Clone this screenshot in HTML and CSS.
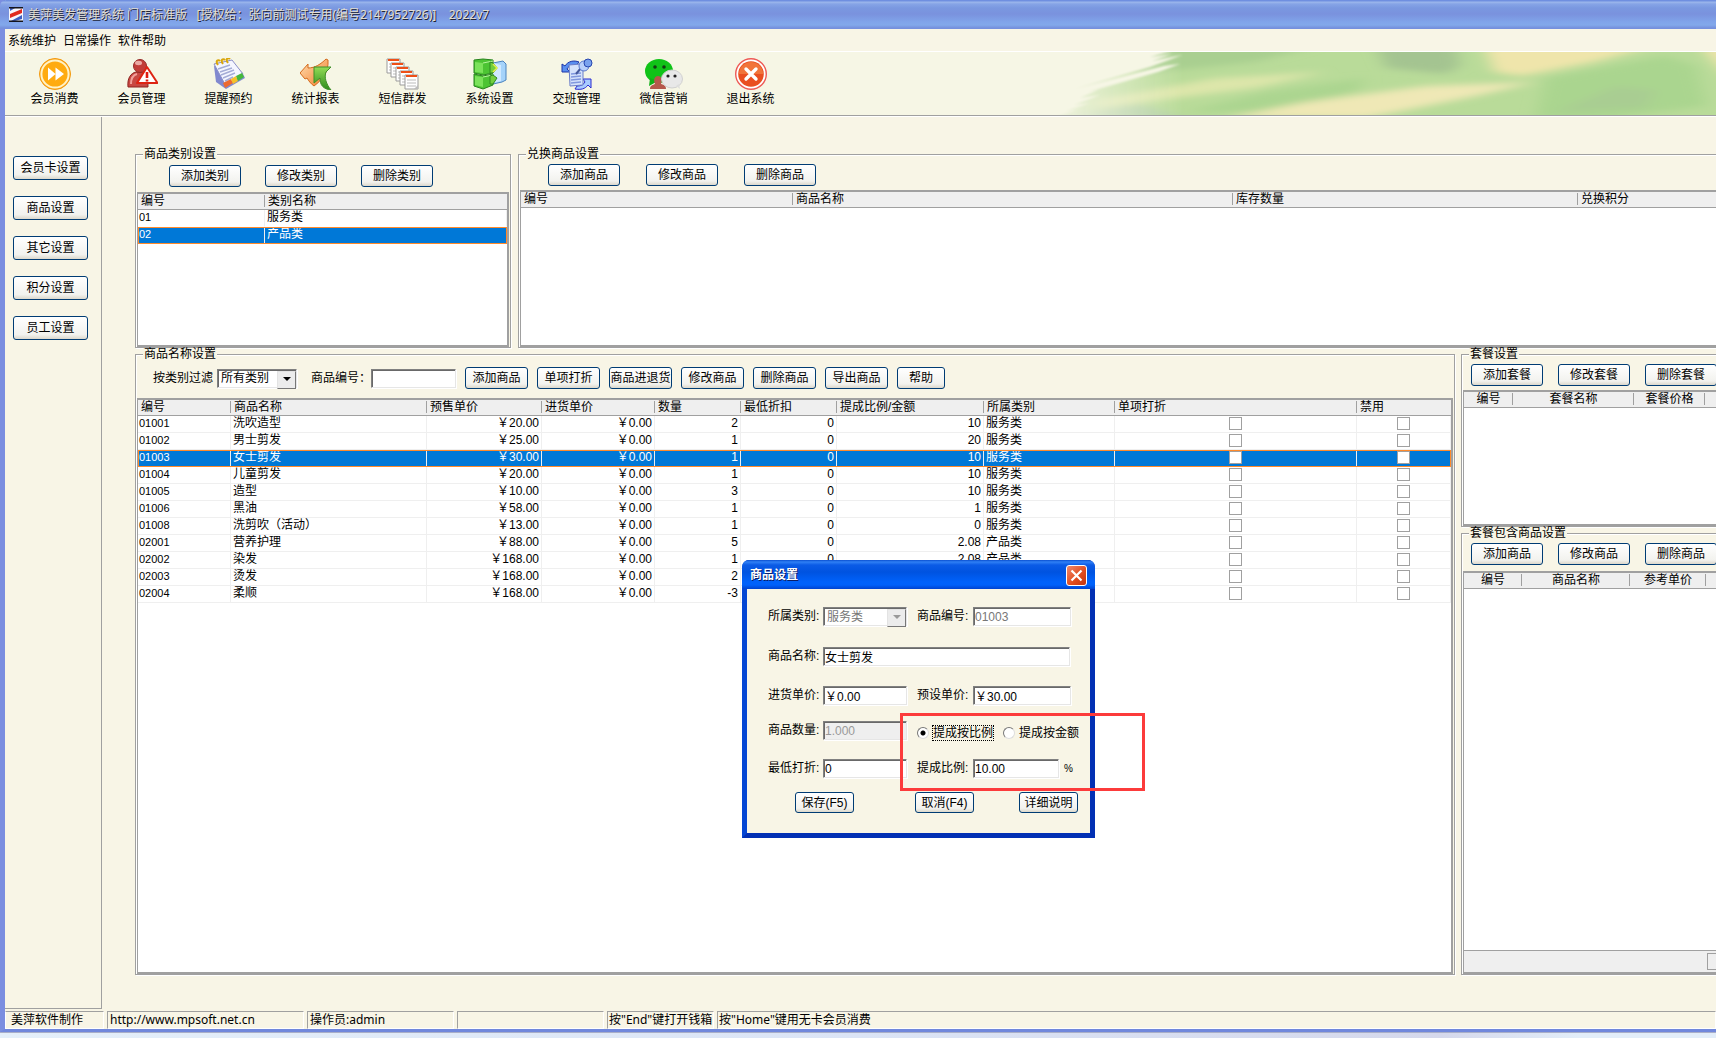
FILE: index.html
```html
<!DOCTYPE html>
<html lang="zh-CN">
<head>
<meta charset="utf-8">
<title>美萍美发管理系统</title>
<link rel="stylesheet" href="styles.css">
</head>
<body>
<div class="window">
  <header class="titlebar">
    <svg class="logo" width="14" height="15" viewBox="0 0 14 15"><rect width="14" height="15" fill="#f6f6fb"/><path d="M1 1h5L1 4z" fill="#3f5fc0"/><path d="M1 7l12-5v4L1 11z" fill="#e02a1e"/><path d="M13 8v4l-7 2H2z" fill="#3f5fc0"/><path d="M0 0h14v1.500H0zM0 13.500h14V15H0z" fill="#14141c"/></svg>
    <h1>美萍美发管理系统 门店标准版&nbsp;&nbsp; [授权给：张向前测试专用(编号2147952726)]&nbsp;&nbsp;&nbsp; 2022v7</h1>
  </header>
  <nav class="menu"><a href="#">系统维护</a><a href="#">日常操作</a><a href="#">软件帮助</a></nav>
  <div class="toolbar">
    <button class="tool"><svg width="32" height="32" viewBox="0 0 32 32"><circle cx="16" cy="16" r="15.500" fill="#ffa51c" stroke="#f29a10"/><circle cx="16" cy="16" r="13.600" fill="#ffab10" stroke="#fff3c8" stroke-width="2"/><path d="M9 9.500l7.500 6.500L9 22.500zM16.500 9.500L25 16l-8.500 6.500z" fill="#fff"/></svg>会员消费</button>
    <button class="tool"><svg width="32" height="32" viewBox="0 0 32 32"><path d="M2 29c-1-9 3-14 8-15h6c5 1 6 6 6 15z" fill="#c84842" stroke="#8e2521"/><path d="M5 26c0-5 2-9 6-10" stroke="#f0a09a" stroke-width="2" fill="none"/><circle cx="14" cy="8" r="6.500" fill="#c23d38" stroke="#952b28"/><ellipse cx="12.500" cy="5" rx="3.500" ry="2.200" fill="#eaa9a3"/><path d="M21 9l10.500 16H11z" fill="#fff" stroke="#dd2413" stroke-width="2" stroke-linejoin="round"/><path d="M21 14v6M21 21.500v2" stroke="#e01b10" stroke-width="2.600"/></svg>会员管理</button>
    <button class="tool"><svg width="32" height="32" viewBox="0 0 32 32"><path d="M1 8l2 16 10 7 19-11-3-6z" fill="#8189cf"/><path d="M1 6L19 2l11 14-17 12z" fill="#f4f6ff" stroke="#8a8fc9"/><path d="M5 11l12-4M7 14l12-4M8 17l13-5M10 20l12-5M12 23l8-4" stroke="#a4acd6" stroke-width="1.400"/><path d="M10 25l8-4 2 4-8 5z" fill="#ed6a30"/><path d="M18 21l5-3 2 5-5 3z" fill="#f5c12a"/><path d="M23 18l6-3 2 4-6 4z" fill="#45b83c"/><path d="M5 7c-3-4 0-6 2-4M10 6c-3-4 0-6 2-4M15 5c-3-4 0-6 2-4" fill="none" stroke="#d9a60b" stroke-width="2"/></svg>提醒预约</button>
    <button class="tool"><svg width="32" height="32" viewBox="0 0 32 32"><defs><linearGradient id="or" x2="1" y2="1"><stop stop-color="#ffe0b4"/><stop offset="1" stop-color="#f27c28"/></linearGradient><linearGradient id="gr" x2="0" y2="1"><stop stop-color="#93dc55"/><stop offset="1" stop-color="#2c8b1c"/></linearGradient></defs><path d="M0 15L8 6v4c7 0 13-4 18-9l2 1c1 12-6 20-14 26-4-3-5-5-7-8l-2 1z" fill="url(#or)" stroke="#d46b1d"/><path d="M14 9h17l-5 5c-2 5 0 12 5 18-8-1-11-5-11-12l-6 5z" fill="url(#gr)" stroke="#3f8f28"/></svg>统计报表</button>
    <button class="tool"><svg width="34" height="32" viewBox="0 0 34 32"><g id="sheet"><path d="M1 1h13v14H1z" fill="#fff" stroke="#9b9b9b"/><path d="M2 1h11v2H2z" fill="#ee5018"/><path d="M3 6h9M3 9h9M3 12h9" stroke="#bbb"/></g><use href="#sheet" x="4" y="4"/><use href="#sheet" x="9" y="8"/><use href="#sheet" x="13" y="12"/><use href="#sheet" x="18" y="16"/><path d="M28 31l4-4v4z" fill="#bbb"/></svg>短信群发</button>
    <button class="tool"><svg width="34" height="32" viewBox="0 0 34 32"><path d="M20 5l10-2 3 3v16l-4 2-9 2z" fill="#a5d3fa" stroke="#4b83bf"/><path d="M20 5l8 2v16l-8 2z" fill="#cfe8ff"/><path d="M1 2l9-1 10 1v13l-10 2-9-2z" fill="#4cc433" stroke="#27831d"/><path d="M1 16l9 2 10-2v11l-10 4-9-3z" fill="#4cc433" stroke="#27831d"/><path d="M2 4l8 1v10l-8-1zM2 18l8 1v10l-8-2z" fill="#7be25a"/><path d="M10 5l10-2M10 19l10-2" stroke="#b5f29c"/><path d="M17 4l3 1 4 5-4 5h-3v-4zM17 18l3-1 4 3-4 6h-3z" fill="#72cf3d" stroke="#2c8a20"/><path d="M20 6l4 4-4 4" fill="none" stroke="#e3ef4b" stroke-width="1.500"/></svg>系统设置</button>
    <button class="tool"><svg width="32" height="32" viewBox="0 0 32 32"><path d="M1 6v8h8l-3-3c2-4 6-4 9-3l3-4C13 2 7 3 4 8z" fill="#5a8ff0" stroke="#1d35a8"/><path d="M30 30v-9h-8l2 3c-2 3-4 4-8 4l-2 3c6 1 10 0 13-4z" fill="#a8cbff" stroke="#2a2ad0"/><path d="M8 7l12-1 2 3v18l-13 1z" fill="#d5e2fb" stroke="#6b7ec8"/><path d="M10 16l10-1M10 19l10-1M10 22l10-1M10 25l10-1" stroke="#8097dd" stroke-width="1.300"/><path d="M15 16l5-6" stroke="#44589c" stroke-width="2"/><circle cx="23" cy="8" r="5" fill="#b9d0fb" stroke="#5a78cd"/><circle cx="27" cy="5" r="4" fill="#7aa2ee" stroke="#2746af"/></svg>交班管理</button>
    <button class="tool"><svg width="38" height="32" viewBox="0 0 38 32"><ellipse cx="14" cy="13" rx="14" ry="12" fill="#10c318"/><path d="M5 20l-1 8 9-5z" fill="#10b018"/><circle cx="10" cy="9" r="1.800" fill="#143c14"/><circle cx="19" cy="9" r="1.800" fill="#143c14"/><path d="M5 31c0-4 3-4 5-5-2-5 0-8 3-8s5 3 3 8c3 1 5 1 5 5z" fill="#b5584c"/><ellipse cx="27" cy="21" rx="10.500" ry="9" fill="#e8e8e8" stroke="#d0d0d0"/><path d="M31 28l4 3-1-5z" fill="#ddd"/><circle cx="23" cy="18" r="1.600" fill="#222"/><circle cx="30" cy="18" r="1.600" fill="#222"/></svg>微信营销</button>
    <button class="tool"><svg width="32" height="32" viewBox="0 0 32 32"><circle cx="16" cy="16" r="15.300" fill="#fff" stroke="#ee5a55" stroke-width="1.400"/><circle cx="16" cy="16" r="12.800" fill="#e94f20"/><path d="M4 16a12 12 0 0 1 24 0z" fill="#f1743a"/><path d="M11 11l10 10M21 11L11 21" stroke="#fff" stroke-width="3.400" stroke-linecap="round"/></svg>退出系统</button>
    <svg class="banner" width="680" height="63" viewBox="0 0 680 63" aria-hidden="true">
      <defs><filter id="b3" x="-30%" y="-60%" width="160%" height="220%"><feGaussianBlur stdDeviation="8 3"/></filter><filter id="b1"><feGaussianBlur stdDeviation="1"/></filter>
      <linearGradient id="fade"><stop stop-color="#fff" stop-opacity="0"/><stop offset=".11" stop-color="#fff" stop-opacity=".55"/><stop offset=".2" stop-color="#fff"/></linearGradient>
      <mask id="brush"><path fill="url(#fade)" filter="url(#b1)" d="M142-3L114 5l22-3-20 7 30-6-32 12-76 22 90-23 16-2-22 8-70 20 10-2-18 8 20-3-26 10 16-2-24 8 12-1-34 10 26-3-16 5H700V-3z"/></mask></defs>
      <g mask="url(#brush)"><rect width="680" height="63" fill="#b9db99"/>
      <g filter="url(#b3)">
        <path d="M110-6h170l-60 16-120 12z" fill="#a9cf90"/>
        <path d="M60 48l120-22 110-6-70 16-160 20z" fill="#dde6aa"/>
        <path d="M20 66l80-14 50 14z" fill="#b0cfa4"/>
        <path d="M150 60l80-20 100-14-10 14-90 20z" fill="#acd590"/>
        <path d="M190 66l80-16 120-16 110-4-60 14-110 22z" fill="#efe8b6"/>
        <path d="M340-6h80l4 20-14 8-60-6z" fill="#a4c491"/>
        <path d="M448-6h170l-60 16-72 14-28-4z" fill="#efe5ab"/>
        <path d="M500 66l10-40 120-22 30 10 10 40-100 12z" fill="#aad58f"/>
        <path d="M520 60l60-26 40 4-10 18z" fill="#a9cd92"/>
        <path d="M664-6h30v34z" fill="#efe5ab"/>
      </g></g>
    </svg>
  </div>

  <div class="body">
    <aside class="sidebar">
      <button class="btn">会员卡设置</button><button class="btn">商品设置</button><button class="btn">其它设置</button><button class="btn">积分设置</button><button class="btn">员工设置</button>
    </aside>
    <main class="content">
      <div class="row-top">
        <fieldset class="group categories">
          <legend>商品类别设置</legend>
          <div class="actions"><button class="btn">添加类别</button><button class="btn">修改类别</button><button class="btn">删除类别</button></div>
          <div class="grid">
            <table>
              <colgroup><col class="w127"><col></colgroup>
              <thead><tr><th>编号</th><th>类别名称</th></tr></thead>
              <tbody><tr><td class="code">01</td><td>服务类</td></tr><tr class="selected"><td class="code">02</td><td>产品类</td></tr></tbody>
            </table>
          </div>
        </fieldset>
        <fieldset class="group open exchange">
          <legend>兑换商品设置</legend>
          <div class="actions"><button class="btn">添加商品</button><button class="btn">修改商品</button><button class="btn">删除商品</button></div>
          <div class="grid">
            <table>
              <colgroup><col class="w272"><col><col class="w345"><col class="w138"></colgroup>
              <thead><tr><th>编号</th><th>商品名称</th><th>库存数量</th><th>兑换积分</th></tr></thead>
            </table>
          </div>
        </fieldset>
      </div>
      <div class="row-bottom">
        <fieldset class="group products">
          <legend>商品名称设置</legend>
          <div class="filters">
            <label for="filter">按类别过滤</label>
            <span class="combo filter"><select id="filter"><option>所有类别</option></select></span>
            <label for="code" class="code-label">商品编号：</label>
            <input id="code" class="field code-field" type="text">
            <button class="btn">添加商品</button><button class="btn">单项打折</button><button class="btn">商品进退货</button><button class="btn">修改商品</button><button class="btn">删除商品</button><button class="btn">导出商品</button><button class="btn help">帮助</button>
          </div>
          <div class="grid">
            <table>
              <colgroup><col class="w93"><col class="w196"><col class="w115"><col class="w113"><col class="w86"><col class="w96"><col class="w147"><col class="w131"><col><col class="w94"></colgroup>
              <thead><tr><th>编号</th><th>商品名称</th><th>预售单价</th><th>进货单价</th><th>数量</th><th>最低折扣</th><th>提成比例/金额</th><th>所属类别</th><th>单项打折</th><th>禁用</th></tr></thead>
              <tbody>
              <tr><td class="code">01001</td><td>洗吹造型</td><td class="num">￥20.00</td><td class="num">￥0.00</td><td class="num">2</td><td class="num">0</td><td class="num">10</td><td>服务类</td><td><input type="checkbox" aria-label="单项打折"></td><td><input type="checkbox" aria-label="禁用"></td></tr>
              <tr><td class="code">01002</td><td>男士剪发</td><td class="num">￥25.00</td><td class="num">￥0.00</td><td class="num">1</td><td class="num">0</td><td class="num">20</td><td>服务类</td><td><input type="checkbox" aria-label="单项打折"></td><td><input type="checkbox" aria-label="禁用"></td></tr>
              <tr class="selected"><td class="code">01003</td><td>女士剪发</td><td class="num">￥30.00</td><td class="num">￥0.00</td><td class="num">1</td><td class="num">0</td><td class="num">10</td><td>服务类</td><td><input type="checkbox" aria-label="单项打折"></td><td><input type="checkbox" aria-label="禁用"></td></tr>
              <tr><td class="code">01004</td><td>儿童剪发</td><td class="num">￥20.00</td><td class="num">￥0.00</td><td class="num">1</td><td class="num">0</td><td class="num">10</td><td>服务类</td><td><input type="checkbox" aria-label="单项打折"></td><td><input type="checkbox" aria-label="禁用"></td></tr>
              <tr><td class="code">01005</td><td>造型</td><td class="num">￥10.00</td><td class="num">￥0.00</td><td class="num">3</td><td class="num">0</td><td class="num">10</td><td>服务类</td><td><input type="checkbox" aria-label="单项打折"></td><td><input type="checkbox" aria-label="禁用"></td></tr>
              <tr><td class="code">01006</td><td>黑油</td><td class="num">￥58.00</td><td class="num">￥0.00</td><td class="num">1</td><td class="num">0</td><td class="num">1</td><td>服务类</td><td><input type="checkbox" aria-label="单项打折"></td><td><input type="checkbox" aria-label="禁用"></td></tr>
              <tr><td class="code">01008</td><td>洗剪吹（活动）</td><td class="num">￥13.00</td><td class="num">￥0.00</td><td class="num">1</td><td class="num">0</td><td class="num">0</td><td>服务类</td><td><input type="checkbox" aria-label="单项打折"></td><td><input type="checkbox" aria-label="禁用"></td></tr>
              <tr><td class="code">02001</td><td>营养护理</td><td class="num">￥88.00</td><td class="num">￥0.00</td><td class="num">5</td><td class="num">0</td><td class="num">2.08</td><td>产品类</td><td><input type="checkbox" aria-label="单项打折"></td><td><input type="checkbox" aria-label="禁用"></td></tr>
              <tr><td class="code">02002</td><td>染发</td><td class="num">￥168.00</td><td class="num">￥0.00</td><td class="num">1</td><td class="num">0</td><td class="num">2.08</td><td>产品类</td><td><input type="checkbox" aria-label="单项打折"></td><td><input type="checkbox" aria-label="禁用"></td></tr>
              <tr><td class="code">02003</td><td>烫发</td><td class="num">￥168.00</td><td class="num">￥0.00</td><td class="num">2</td><td></td><td></td><td></td><td><input type="checkbox" aria-label="单项打折"></td><td><input type="checkbox" aria-label="禁用"></td></tr>
              <tr><td class="code">02004</td><td>柔顺</td><td class="num">￥168.00</td><td class="num">￥0.00</td><td class="num">-3</td><td></td><td></td><td></td><td><input type="checkbox" aria-label="单项打折"></td><td><input type="checkbox" aria-label="禁用"></td></tr>
              </tbody>
            </table>
          </div>
        </fieldset>
        <div class="packages">
          <fieldset class="group open package">
            <legend>套餐设置</legend>
            <div class="actions"><button class="btn">添加套餐</button><button class="btn">修改套餐</button><button class="btn">删除套餐</button></div>
            <div class="grid centered">
              <table><colgroup><col class="w49"><col class="w121"><col class="w71"><col></colgroup>
              <thead><tr><th>编号</th><th>套餐名称</th><th>套餐价格</th><th></th></tr></thead></table>
            </div>
          </fieldset>
          <fieldset class="group open package-items">
            <legend>套餐包含商品设置</legend>
            <div class="actions"><button class="btn">添加商品</button><button class="btn">修改商品</button><button class="btn">删除商品</button></div>
            <div class="grid centered">
              <table><colgroup><col class="w58"><col class="w108"><col class="w76"><col></colgroup>
              <thead><tr><th>编号</th><th>商品名称</th><th>参考单价</th><th></th></tr></thead></table>
              <div class="scroll"><span class="thumb"></span></div>
            </div>
          </fieldset>
        </div>
      </div>
    </main>
  </div>

  <footer class="status">
    <span class="pane maker">美萍软件制作</span><span class="pane site">http://www.mpsoft.net.cn</span><span class="pane mid">操作员:admin</span><span class="pane mid"></span><span class="pane key">按"End"键打开钱箱</span><span class="pane rest">按"Home"键用无卡会员消费</span>
  </footer>
</div>
<div class="desktop"></div>

<section class="dialog" role="dialog" aria-labelledby="dlg-title">
  <header><h2 id="dlg-title">商品设置</h2><button class="close" aria-label="关闭"><svg width="21" height="21" viewBox="0 0 21 21"><path d="M5.500 5.500l10 10M15.500 5.500l-10 10" stroke="#fff" stroke-width="2.200"/></svg></button></header>
  <form>
    <div class="form-grid">
      <label for="f1">所属类别:</label><span class="combo disabled"><select id="f1" disabled><option>服务类</option></select></span>
      <label for="f2">商品编号:</label><input id="f2" class="field dim w98" value="01003">
      <label for="f3">商品名称:</label><input id="f3" class="field wide" value="女士剪发">
      <label for="f4">进货单价:</label><input id="f4" class="field" value="￥0.00">
      <label for="f5">预设单价:</label><input id="f5" class="field w98" value="￥30.00">
      <label for="f6">商品数量:</label><input id="f6" class="field" value="1.000" disabled>
      <div class="radios"><input type="radio" name="mode" id="r1" checked><label for="r1" class="focused">提成按比例</label><input type="radio" name="mode" id="r2"><label for="r2">提成按金额</label></div>
      <label for="f7">最低打折:</label><input id="f7" class="field" value="0">
      <label for="f8">提成比例:</label><span class="ratio"><input id="f8" class="field w86" value="10.00"><span>%</span></span>
    </div>
    <div class="form-actions"><button type="button" class="btn">保存(F5)</button><button type="button" class="btn">取消(F4)</button><button type="button" class="btn detail">详细说明</button></div>
  </form>
</section>
<div class="callout"></div>
</body>
</html>
```
FILE: styles.css
```css
:root {
  --cream: #f8f5e6;
  --line: #a0a0a0;
  --head: #efefef;
  --blue: #0078d7;
}
* { box-sizing: border-box; }
html, body { margin: 0; height: 100%; overflow: hidden; }
body {
  display: flex;
  flex-direction: column;
  min-height: 100vh;
  background: var(--cream);
  color: #000;
  font: 12px/16px "Liberation Sans", "Noto Sans CJK SC", sans-serif;
  white-space: nowrap;
}
button, input, select { font: inherit; color: inherit; }
.window {
  flex: 1;
  min-height: 0;
  display: flex;
  flex-direction: column;
  border-left: 5px solid #7b8ee0;
  border-bottom: 3px solid #7087dc;
}
.desktop {
  height: 6px;
  border-top: 1px solid #a9aec8;
  background: linear-gradient(90deg, #e4effa, #dbe4f6 50%, #d5d8ec 84%, #e2edf9 92%);
}

/* title bar and menu */
.titlebar {
  height: 29px;
  margin-left: -5px;
  padding: 1px 9px;
  display: flex;
  align-items: center;
  gap: 5px;
  border-radius: 6px 0 0 0;
  background: linear-gradient(#6f8fe0 0, #6f8fe0 1px, #9db8ec 2px, #86a4e6 4px, #7a98e0 8px, #7a92de 14px, #80a4ea 22px, #82a8ea 25px, #7590dd 28px);
}
.titlebar h1 {
  margin: 0;
  font: 12px/16px "Noto Sans", "Noto Sans CJK SC", sans-serif;
  color: #e2ded0;
  text-shadow: 1px 1px 0 #202538;
}
.menu {
  height: 23px;
  display: flex;
  gap: 7px;
  padding: 4px 3px 0;
  border-bottom: 1px solid #fff;
}
.menu a { color: inherit; text-decoration: none; }

/* toolbar */
.toolbar {
  height: 64px;
  display: flex;
  padding-left: 6px;
  border-bottom: 1px solid var(--line);
  background: #f6f6e5;
  overflow: hidden;
}
.tool {
  flex: none;
  width: 87px;
  padding: 6px 0 0;
  border: 0;
  background: none;
  display: flex;
  flex-direction: column;
  align-items: center;
  line-height: 18px;
}
.banner { flex: none; margin-left: auto; }

/* raised buttons */
.btn {
  flex: none;
  width: 72px;
  height: 22px;
  padding: 0;
  border: 1px solid #003c74;
  border-radius: 3px;
  background: linear-gradient(#fff, #f2f2ee 80%, #dcd8cc);
  line-height: 18px;
}

.body { flex: 1; min-height: 0; display: flex; border-top: 1px solid #fff; }
.sidebar {
  flex: none;
  width: 97px;
  margin-bottom: 2px;
  padding: 39px 8px;
  display: flex;
  flex-direction: column;
  gap: 16px;
  border-right: 1px solid var(--line);
  border-bottom: 1px solid var(--line);
}
.sidebar .btn { width: 75px; height: 24px; }

.content {
  flex: 1;
  min-width: 0;
  display: flex;
  flex-direction: column;
  padding: 31px 0 36px 33px;
}
.row-top { flex: none; height: 200px; display: flex; gap: 7px; }
.row-bottom { flex: 1; min-height: 0; display: flex; gap: 6px; }

.group {
  min-width: 0;
  margin: 0;
  padding: 0 1px 0;
  border: 1px solid var(--line);
  box-shadow: 1px 1px 0 #fff, inset 1px 1px 0 #fff;
  display: flex;
  flex-direction: column;
}
.group.open { border-right: 0; padding-right: 0; }
.group legend {
  margin-left: 6px;
  padding: 0 1px;
  line-height: 12px;
  background: var(--cream);
}
.categories { flex: none; width: 376px; }
.exchange { flex: 1; }
.products { flex: 1; }
.packages { flex: none; width: 255px; display: grid; grid-template-rows: 179px 1fr; }

.actions { flex: none; display: flex; gap: 24px; height: 30px; padding: 4px 0 0 32px; }
.categories .actions { height: 32px; padding-top: 5px; }
.exchange .actions { gap: 26px; padding-left: 28px; }
.packages .actions { gap: 15px; padding-left: 8px; }
.package-items .actions { height: 32px; }

.filters { flex: none; display: flex; align-items: center; height: 38px; padding: 7px 0 9px 16px; }
.filters .btn { width: 63px; margin-left: 9px; }
.filters .btn.help { width: 48px; }
.filter { margin-left: 4px; }
.code-label { margin-left: 14px; }
.filters .code-field { width: 85px; }

/* data grids */
.grid {
  flex: 1;
  min-height: 0;
  display: flex;
  flex-direction: column;
  border: 2px solid var(--line);
  border-left-width: 1px;
  background: #fff;
}
.open .grid { border-right: 0; }
table { width: 100%; table-layout: fixed; border-spacing: 0; }
th, td { padding: 0 2px; height: 17px; line-height: 15px; overflow: hidden; text-align: left; vertical-align: top; font-weight: normal; }
th { height: 16px; padding: 0 3px; line-height: 14px; border-bottom: 1px solid var(--line); background: linear-gradient(var(--line), var(--line)) right 1px / 1px 12px no-repeat var(--head); }
th:last-child { background: var(--head); }
td { border-right: 1px solid #efefef; border-bottom: 1px solid #efefef; }
.categories td { border-bottom-color: #fff; }
.centered th { text-align: center; }
.code { padding-left: 1px; font-size: 11px; }
.num { text-align: right; }
.selected td { background: var(--blue); color: #fff; border-bottom-color: #fff; }
.selected { outline: 1px solid #ff8a2b; outline-offset: -1px; }
td input[type="checkbox"] {
  appearance: none;
  display: block;
  width: 13px;
  height: 13px;
  margin: 1px auto 0;
  border: 1px solid var(--line);
  background: #fff;
}
.w49 { width: 49px; } .w58 { width: 58px; } .w71 { width: 71px; } .w76 { width: 76px; }
.w86 { width: 86px; } .w93 { width: 93px; } .w94 { width: 94px; } .w96 { width: 96px; }
.w108 { width: 108px; } .w113 { width: 113px; } .w115 { width: 115px; } .w121 { width: 121px; }
.w127 { width: 127px; } .w131 { width: 131px; } .w138 { width: 138px; } .w147 { width: 147px; }
.w196 { width: 196px; } .w272 { width: 272px; } .w345 { width: 345px; }
.scroll { height: 22px; margin-top: auto; padding: 2px 0; display: flex; justify-content: flex-end; border-top: 1px solid var(--line); background: var(--head); }
.thumb { width: 9px; height: 17px; border: 1px solid var(--line); border-right: 0; }

/* sunken fields */
.field, .combo select {
  height: 19px;
  width: 84px;
  padding: 0 1px;
  border: 1px solid;
  border-color: #808080 #e6e6e6 #e6e6e6 #808080;
  border-radius: 0;
  box-shadow: inset 1px 1px 0 #696969, 1px 1px 0 #fff;
  background: #fff;
  line-height: 16px;
}
.field.dim { color: #777; }
.field:disabled { background: #efefef; color: #999; }
.combo { position: relative; display: block; width: 84px; }
.combo select { display: block; width: 100%; padding-left: 3px; appearance: none; opacity: 1; }
.combo::before {
  content: "";
  position: absolute;
  top: 2px;
  right: 1px;
  width: 17px;
  height: 16px;
  border: 1px solid;
  border-color: #e3e3e3 #777 #777 #e3e3e3;
  background: #ececec;
  pointer-events: none;
}
.combo::after {
  content: "";
  position: absolute;
  top: 8px;
  right: 6px;
  border: 4px solid transparent;
  border-top-color: #000;
  border-bottom: 0;
  pointer-events: none;
}
.combo.filter { width: 80px; }
.combo.disabled select { color: #777; }
.combo.disabled::after { border-top-color: #999; }

/* status bar */
.status {
  flex: none;
  height: 18px;
  display: flex;
  gap: 3px;
  font: 12px/17px "Noto Sans", "Noto Sans CJK SC", sans-serif;
}
.pane { flex: none; padding-left: 2px; border: 1px solid; border-color: var(--line) #fff #fff var(--line); line-height: 16px; overflow: hidden; }
.maker { width: 99px; padding-left: 5px; border-left-color: #fff; }
.site { width: 197px; }
.mid { width: 147px; }
.key { width: 107px; padding-left: 1px; }
.rest { flex: 1; padding-left: 1px; }

/* product dialog, floating over the main window */
.dialog {
  position: absolute;
  left: 742px;
  top: 560px;
  width: 353px;
  border: 5px solid #0446d4;
  border-top: 0;
  border-right-color: #0230b4;
  border-bottom-color: #0230b4;
  border-radius: 7px 7px 0 0;
  background: #0446d4;
}
.dialog header {
  height: 29px;
  margin: 0 -5px;
  padding: 1px 8px 0;
  display: flex;
  align-items: center;
  justify-content: space-between;
  border-radius: 7px 7px 0 0;
  background: linear-gradient(#0a4fd0 0, #2f80f5 2px, #0b5be6 5px, #0053e0 12px, #0062fb 22px, #0061fa 25px, #0043cf 29px);
}
.dialog h2 { margin: 0; font-size: 12px; line-height: 16px; color: #fff; text-shadow: 1px 1px 0 #0a1c66; }
.close { width: 21px; height: 21px; padding: 0; border: 1px solid #fff; border-radius: 3px; background: linear-gradient(135deg, #f0886a, #e04a1c 60%, #c23510); }
.close svg { display: block; margin: -1px; }
.dialog form { height: 244px; background: var(--cream); }
.form-grid {
  display: grid;
  grid-template-columns: 55px 94px 56px 1fr;
  grid-template-rows: 40px 39px 35px 38px 33px;
  align-items: start;
  padding: 18px 0 0 21px;
}
.form-grid label { line-height: 19px; }
.form-grid .wide { grid-column: span 3; width: 247px; }
.form-grid .w98 { width: 98px; }
.form-grid .w86 { width: 86px; }
.radios { grid-column: span 2; height: 24px; display: flex; align-items: center; }
.radios label { line-height: 14px; padding: 0; margin: 0 9px 0 3px; border: 1px dotted transparent; }
.radios label.focused { border-color: #000; }
.radios input {
  flex: none;
  appearance: none;
  width: 12px;
  height: 12px;
  margin: 0;
  border: 1px solid;
  border-color: #777 #ddd #ddd #777;
  border-radius: 50%;
  background: #fff;
}
.radios input:checked { background: radial-gradient(circle, #000 0, #000 2px, #fff 3px); }
.ratio { display: flex; gap: 5px; line-height: 20px; }
.ratio > span { font-size: 10px; }
.form-actions { display: flex; padding-left: 48px; }
.form-actions .btn { width: 59px; height: 21px; margin-right: 61px; }
.form-actions .btn + .btn { margin-right: 45px; }

/* highlight frame around the commission settings */
.callout { position: absolute; left: 900px; top: 713px; width: 245px; height: 78px; border: 3px solid #fc3b3b; }
```
